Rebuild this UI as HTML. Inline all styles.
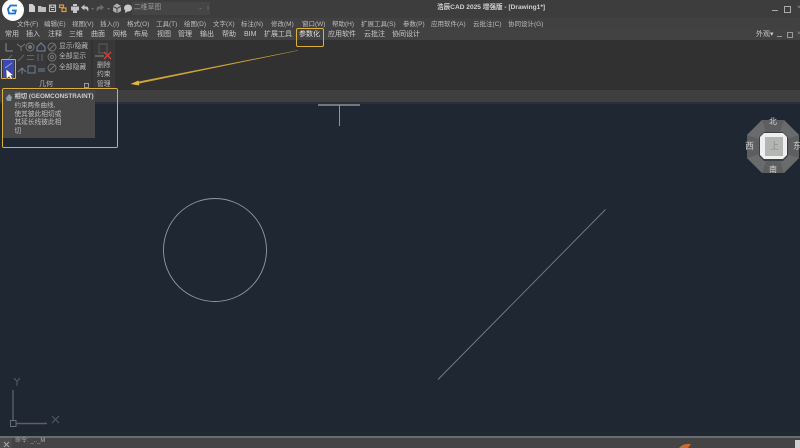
<!DOCTYPE html>
<html><head><meta charset="utf-8">
<style>
html,body{margin:0;padding:0;background:#1f2733;}
#p{position:relative;width:800px;height:448px;overflow:hidden;background:#1f2733;font-family:"Liberation Sans","Noto Sans CJK SC",sans-serif;}
.b{position:absolute;}
.t{position:absolute;white-space:nowrap;font-size:6.5px;line-height:10px;color:#bdbdbd;filter:blur(.35px);}
.m{top:19.5px}
.r{top:30px;color:#cacaca;font-size:7px}
.l{font-size:6.8px;color:#b8b8b8}
</style></head><body><div id="p">
<div class="b" style="left:0;top:0;width:800px;height:18px;background:#3d3d3d"></div>
<div class="b" style="left:0;top:18px;width:800px;height:12px;background:#414141"></div>
<div class="b" style="left:0;top:30px;width:800px;height:10px;background:#424242"></div>
<div class="b" style="left:0;top:40px;width:800px;height:50px;background:#313131"></div>
<div class="b" style="left:0;top:40px;width:115px;height:50px;background:#383838"></div>
<div class="b" style="left:0;top:90px;width:800px;height:12px;background:#3f3f3f"></div>
<div class="b" style="left:0;top:102px;width:800px;height:1.5px;background:#2b2f36"></div>

<!-- logo -->
<div class="b" style="left:2px;top:-1px;width:22px;height:22px;border-radius:50%;background:#fff"></div>
<svg class="b" style="left:6px;top:4px" width="12" height="11" viewBox="0 0 12 11"><path d="M11 1.500H4.500L2 5l1 4.500h6l.8-3H6" fill="none" stroke="#1a73c9" stroke-width="1.800"/></svg>

<!-- quick access icons -->
<svg class="b" style="left:0;top:0;filter:blur(.3px)" width="215" height="18" viewBox="0 0 215 18" fill="none">
<rect x="132" y="2" width="78" height="13" fill="#454545"/>
<path d="M29 4h3.500L35 6.500V12h-6z" fill="#cfcfcf"/>
<path d="M38 6h3l1 1h4v5h-8z" fill="#bdbdbd"/>
<path d="M49.500 5h6v6.500h-6zM51 5v2.500h3V5M51 9.500h3" stroke="#c4c4c4" stroke-width="1.100"/>
<path d="M59.500 5h4v2.500h-4zM62 8h4v3.500h-4z" stroke="#d99b3c" stroke-width="1.200"/>
<path d="M73 4h4v2h-4zM71 6.500h8v4h-8zM73 10.500h4V13h-4z" fill="#c4c4c4"/>
<path d="M81 7.500l3.500-3v2h1.500c2.500 0 3 2.500 2 5-1-2-2-3-3.500-3v2z" fill="#c4c4c4"/>
<path d="M91 8h3l-1.500 2z" fill="#707070"/>
<path d="M104 7.500l-3.500-3v2H99c-2.500 0-3 2.500-2 5 1-2 2-3 3.500-3v2z" fill="#6e6e6e"/>
<path d="M107 8h3l-1.500 2z" fill="#707070"/>
<path d="M113 6l4-2.500 4 2.500v5l-4 2.500-4-2.500z" fill="#adadad"/>
<path d="M113 6.500l4 2 4-2M117 8.500v5" stroke="#444"/>
<ellipse cx="128" cy="8" rx="4" ry="3.500" fill="#c8c8c8"/>
<path d="M125.500 10l-.5 3 3.500-2z" fill="#c8c8c8"/>
<path d="M199 8h3l-1.500 1.500z" fill="#666"/>
<path d="M208 6v4" stroke="#666"/>
</svg>
<div class="t" style="left:134px;top:3px;color:#9d9d9d;font-size:6.8px">二维草图</div>
<div class="t" style="left:437px;top:3px;font-size:6.6px;color:#d0d0d0;font-weight:bold">浩辰CAD 2025 增强版 - [Drawing1*]</div>

<!-- window controls -->
<div class="b" style="left:772px;top:10px;width:6px;height:1px;background:#aaa"></div>
<div class="b" style="left:784px;top:6px;width:5px;height:5px;border:1px solid #aaa"></div>
<div class="t" style="left:797px;top:3px;color:#999">×</div>

<!-- menu -->
<span class="t m" style="left:17px">文件(F)</span><span class="t m" style="left:44px">编辑(E)</span><span class="t m" style="left:72px">视图(V)</span><span class="t m" style="left:100px">插入(I)</span><span class="t m" style="left:127px">格式(O)</span><span class="t m" style="left:156px">工具(T)</span><span class="t m" style="left:184px">绘图(D)</span><span class="t m" style="left:213px">文字(X)</span><span class="t m" style="left:241px">标注(N)</span><span class="t m" style="left:271px">修改(M)</span><span class="t m" style="left:302px">窗口(W)</span><span class="t m" style="left:332px">帮助(H)</span><span class="t m" style="left:361px">扩展工具(S)</span><span class="t m" style="left:403px">参数(P)</span><span class="t m" style="left:431px">应用软件(A)</span><span class="t m" style="left:473px">云批注(C)</span><span class="t m" style="left:508px">协同设计(G)</span>

<!-- tabs -->
<span class="t r" style="left:5px">常用</span><span class="t r" style="left:26px">插入</span><span class="t r" style="left:48px">注释</span><span class="t r" style="left:69px">三维</span><span class="t r" style="left:91px">曲面</span><span class="t r" style="left:113px">网格</span><span class="t r" style="left:134px">布局</span><span class="t r" style="left:157px">视图</span><span class="t r" style="left:178px">管理</span><span class="t r" style="left:200px">输出</span><span class="t r" style="left:222px">帮助</span><span class="t r" style="left:244px">BIM</span><span class="t r" style="left:264px">扩展工具</span><span class="t r" style="left:299px;color:#e0e0e0">参数化</span><span class="t r" style="left:328px">应用软件</span><span class="t r" style="left:364px">云批注</span><span class="t r" style="left:392px">协同设计</span><span class="t r" style="left:756px">外观▾</span>
<div class="b" style="left:777px;top:36px;width:5px;height:1px;background:#999"></div>
<div class="b" style="left:787px;top:32px;width:4px;height:4px;border:1px solid #999"></div>
<div class="t" style="left:797px;top:29px;color:#999">×</div>

<!-- highlight on tab -->
<div class="b" style="left:296px;top:27.500px;width:25.500px;height:17px;border:1.500px solid #dcae3a;border-radius:2px"></div>

<!-- ribbon icons -->
<svg class="b" style="left:0;top:40px;filter:blur(.35px)" width="115" height="50" viewBox="0 0 115 50" fill="none" stroke="#777">
<path d="M6 3v8h7" stroke="#8a8a8a"/>
<path d="M17 4l4 3 4-3M21 7v4"/>
<circle cx="30" cy="7" r="4"/><circle cx="30" cy="7" r="1.500" fill="#777"/>
<path d="M37 7l4-4 4 4v4h-8z" stroke="#7287a8"/>
<path d="M6 21l6-6M18 21l6-6" stroke="#666"/>
<path d="M27 15.500h7M27 19.500h7M38 14v7M42 14v7" stroke="#5f6670"/>
<path d="M18 32l4-4 4 4M22 28v6M28 26h7v7h-7zM38 29h7M38 31h7" stroke="#6e7f90"/>
<line x1="48" y1="2" x2="48" y2="33" stroke="#2e2e2e"/>
<circle cx="52" cy="7" r="4"/><path d="M49 10l6-6"/>
<circle cx="52" cy="17" r="4"/><circle cx="52" cy="17" r="1.500"/>
<circle cx="52" cy="28" r="4"/><path d="M49 31l6-6"/>
<line x1="92" y1="0" x2="92" y2="50" stroke="#2c2c2c"/>
<path d="M99 4h8v9h-8z" stroke="#5a5a5a"/>
<path d="M95 16h9" stroke="#8a8a8a"/>
<path d="M104 12l7 7M111 12l-7 7" stroke="#c9433a" stroke-width="1.400"/>
</svg>
<span class="t l" style="left:59px;top:42px">显示/隐藏</span>
<span class="t l" style="left:59px;top:52px">全部显示</span>
<span class="t l" style="left:59px;top:63px">全部隐藏</span>
<span class="t l" style="left:97px;top:61px">删除</span>
<span class="t l" style="left:97px;top:70px">约束</span>
<span class="t l" style="left:97px;top:80px">管理</span>
<span class="t l" style="left:39px;top:80px;font-size:7px">几何</span>
<div class="b" style="left:84px;top:83px;width:3px;height:3px;border:1px solid #999"></div>

<!-- selected tool -->
<div class="b" style="left:2.500px;top:60px;width:11.500px;height:18px;background:#3a49b5"></div>
<div class="b" style="left:1px;top:59px;width:12.500px;height:18px;border:1.500px solid #dcae3a;border-radius:1px"></div>
<svg class="b" style="left:3px;top:61px" width="12" height="20" viewBox="0 0 12 20"><path d="M2 7l7-5" stroke="#8fa1de"/><path d="M3 8l.5 10 2.500-2.500 2 3 1.500-1-1.800-3h3z" fill="#fff" stroke="#222" stroke-width=".4"/></svg>

<!-- arrow -->
<svg class="b" style="left:0;top:0" width="800" height="448" viewBox="0 0 800 448" fill="none">
<path d="M298 50.200 L298 50.600 L138 83.800 L137.600 81.800z" fill="#cfa53a"/>
<path d="M130.500 84l8-3.500 .8 5z" fill="#e6b73f"/>
</svg>

<!-- tooltip -->
<div class="b" style="left:3px;top:90px;width:92px;height:48px;background:#484848"></div>
<div class="b" style="left:1.500px;top:88px;width:114px;height:58px;border:1.500px solid #dcae3a;border-radius:2px"></div>
<svg class="b" style="left:5px;top:92.500px" width="9" height="9" viewBox="0 0 9 9"><path d="M1 5l3-4 3 3-1 4H2z" fill="#8f9aa8"/></svg>
<span class="t" style="left:14.500px;top:92px;font-size:6.3px;font-weight:bold;color:#cfcfcf">相切 (GEOMCONSTRAINT)</span>
<span class="t" style="left:14.500px;top:101px;color:#bcbcbc;font-size:6.500px">约束两条曲线,</span>
<span class="t" style="left:14.500px;top:109.500px;color:#bcbcbc;font-size:6.700px">使其彼此相切或</span>
<span class="t" style="left:14.500px;top:118px;color:#bcbcbc;font-size:6.700px">其延长线彼此相</span>
<span class="t" style="left:14.500px;top:127px;color:#bcbcbc;font-size:6.700px">切</span>

<!-- canvas -->
<svg class="b" style="left:0;top:0" width="800" height="448" viewBox="0 0 800 448" fill="none">
<path d="M318 105h42" stroke="#6f7780" stroke-width="2"/>
<path d="M339.500 105v21" stroke="#8e959d"/>
<circle cx="215" cy="250" r="51.500" stroke="#93989e" stroke-width=".9"/>
<path d="M438 379.500L605.500 209.500" stroke="#767c84" stroke-width=".9"/>
<!-- UCS -->
<path d="M13 390v30M16 423.500h31" stroke="#5a6069" stroke-width="1.400"/>
<rect x="10.500" y="420.500" width="5.500" height="6" stroke="#666d76"/>
<path d="M14 378l3 3.500 3-3.500M17 381.500v4.500" stroke="#555b64"/>
<path d="M52 416l7 7M59 416l-7 7" stroke="#555b64"/>
<!-- ViewCube -->
<path d="M762 120h22l15 15v23l-15 15h-22l-15-15v-23z" fill="#5c5e60"/>
<path d="M762 120l-15 15 13 4 6-7zM784 120l15 15-13 4-6-7zM762 173l-15-15 13-4 6 7zM784 173l15-15-13-4-6 7z" fill="#6a6b6d"/>
<path d="M766 132l-6 7M781 132l6 7M760 154l6 7M787 154l-6 7" stroke="#3a3f46"/>
<path d="M764 132h19l5 5v19l-5 5h-19l-5-5v-19z" fill="#3b4047"/>
<path d="M764 133h19l4 4v18l-4 4h-19l-4-4v-18z" fill="#efefef"/>
<rect x="765" y="137" width="18" height="19" fill="#b4b6b4"/>
</svg>
<span class="t" style="left:769px;top:117px;color:#d8d8d8;font-size:8px">北</span>
<span class="t" style="left:745px;top:141px;color:#c8c8c8;font-size:9px">西</span>
<span class="t" style="left:793px;top:141px;color:#c8c8c8;font-size:9px">东</span>
<span class="t" style="left:769px;top:165px;color:#d8d8d8;font-size:8px">南</span>
<span class="t" style="left:770px;top:141px;color:#8a8c8a;font-size:9px">上</span>

<!-- bottom -->
<div class="b" style="left:0;top:435.500px;width:800px;height:2px;background:#6a6c6f"></div>
<div class="b" style="left:0;top:437.500px;width:800px;height:10.500px;background:#444"></div>
<div class="b" style="left:0;top:437.500px;width:12px;height:10.500px;background:#4d4d4d"></div>
<svg class="b" style="left:3px;top:441px" width="7" height="7"><path d="M1 1l5 5M6 1L1 6" stroke="#aaa"/></svg>
<span class="t" style="left:15px;top:436px;font-size:6px;color:#aaa">命令: _.._M</span>
<svg class="b" style="left:676px;top:443px" width="20" height="5"><path d="M3 5q4-5 12-4l-3 4z" fill="#c96a34"/></svg>
<div class="b" style="left:795px;top:440px;width:5px;height:8px;background:#cfcfcf"></div>
</div></body></html>
